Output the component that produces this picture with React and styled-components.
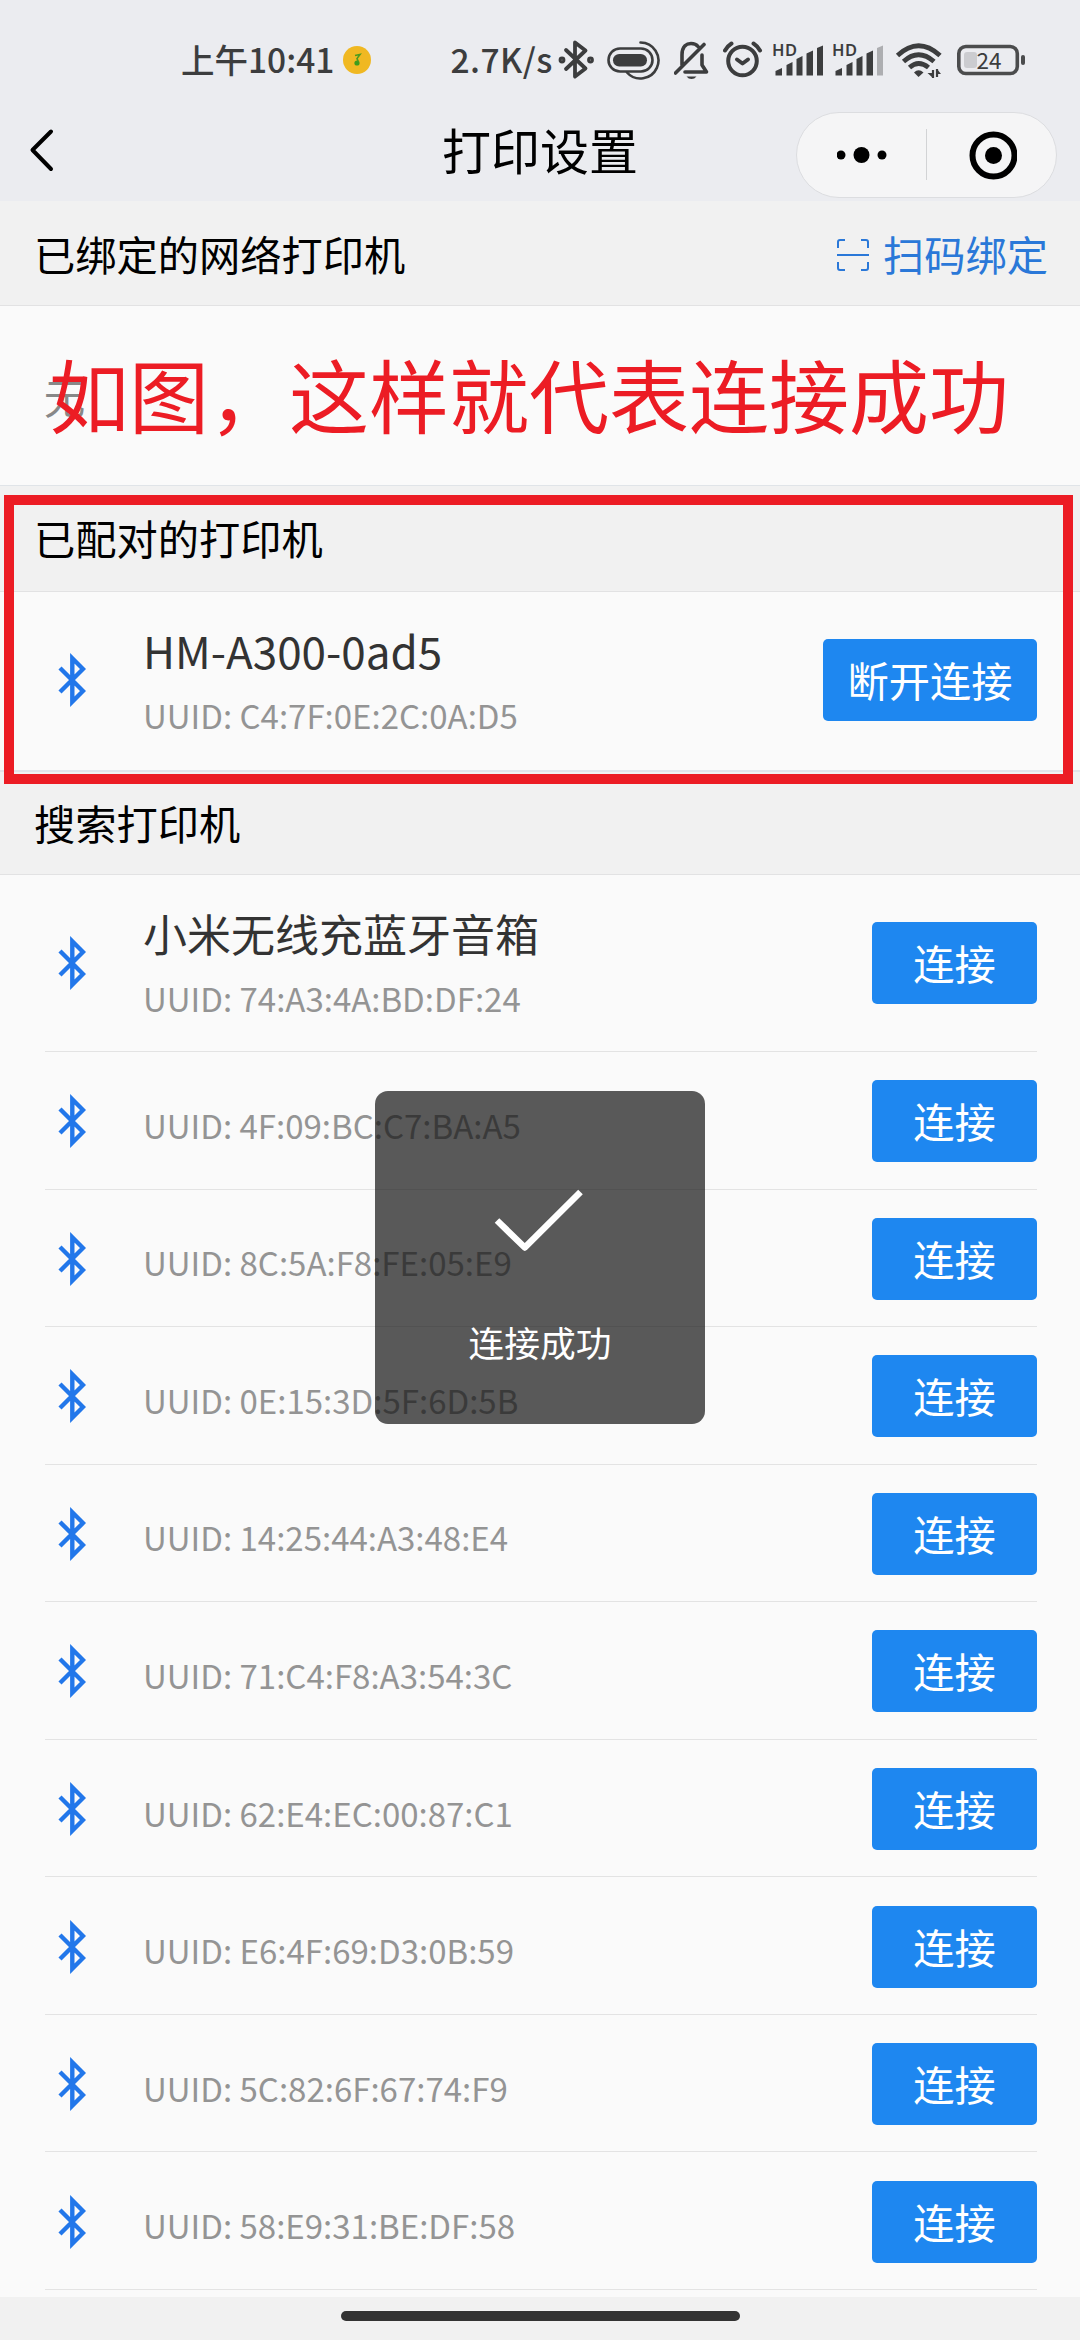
import React from 'react';
import styled, { createGlobalStyle } from 'styled-components';

const GlobalStyle = createGlobalStyle`
  * { box-sizing: border-box; }
  body { margin: 0; background: #f1f1f1; }
`;

const ink = '#3c3d3e';

const Screen = styled.main`
  position: relative;
  display: flex;
  flex-direction: column;
  width: 1080px;
  height: 2340px;
  overflow: hidden;
  background: #f1f1f1;
  color: #000;
  font-family: 'Noto Sans CJK SC', 'Noto Sans', sans-serif;
  white-space: nowrap;
`;

const StatusBar = styled.header`
  display: flex;
  align-items: center;
  height: 100px;
  padding: 18px 53px 0 181px;
  background: #ebecf0;
  color: ${ink};
`;

const StatusText = styled.span`
  font-size: 33.5px;
  font-weight: 500;
  line-height: 60px;
  letter-spacing: ${(p) => p.$spacing || 0}px;
  margin-left: ${(p) => p.$gap || 0}px;
`;

const Glyph = styled.svg`
  display: block;
  flex: none;
  margin-left: ${(p) => p.$gap || 0}px;
`;

const NavBar = styled.nav`
  display: grid;
  grid-template-columns: 284px 1fr 284px;
  align-items: center;
  height: 101px;
  padding-bottom: 1px;
  background: #ebecf0;
`;

const BackButton = styled.div`
  display: flex;
  padding-left: 28px;
`;

const Title = styled.h1`
  margin: 0;
  padding-bottom: 2px;
  font-size: 49px;
  font-weight: 400;
  line-height: 60px;
  text-align: center;
`;

const Capsule = styled.div`
  display: flex;
  align-items: center;
  width: 261px;
  height: 86px;
  margin: 9px 0 0 0;
  border: 1px solid #dcdde0;
  border-radius: 43px;
  background: #f5f5f6;
`;

const CapsuleHalf = styled.div`
  display: flex;
  flex: 1;
  justify-content: center;
`;

const CapsuleDivider = styled.div`
  width: 1px;
  height: 51px;
  background: #d2d3d5;
`;

const SectionHeader = styled.h2`
  display: flex;
  align-items: center;
  justify-content: space-between;
  flex: none;
  height: ${(p) => p.$height}px;
  margin: 0;
  padding: 0 32px ${(p) => p.$bottom}px 34px;
  border-bottom: 1px solid #e2e2e3;
  font-size: 41.25px;
  font-weight: 400;
  line-height: 60px;
`;

const ScanLink = styled.span`
  display: flex;
  align-items: center;
  gap: 14px;
  color: #2a78d8;
`;

const ScanIcon = styled.svg`
  margin-top: 5px;
`;

const Panel = styled.section`
  flex: none;
  background: #fafafa;
`;

const EmptyPanel = styled(Panel)`
  display: flex;
  align-items: center;
  height: 180px;
  padding: 0 45px 0 44px;
  border-bottom: 1px solid #e0e4e8;
  color: #888;
  font-size: 41.25px;
`;

const PairedPanel = styled(Panel)`
  border-bottom: 2px solid #e2e4e9;
`;

const Row = styled.div`
  display: grid;
  grid-template-columns: 98px 1fr auto;
  align-items: center;
  height: ${(p) => (p.$tall ? 177.5 : 137.56)}px;
  margin: 0 43px 0 45px;
  padding-top: ${(p) => (p.$tall ? 0 : 2)}px;
  padding-bottom: ${(p) => (p.$plain ? 2 : 0)}px;
  border-bottom: ${(p) => (p.$plain ? 'none' : '1px solid #e3e3e3')};
`;

const RowIcon = styled.span`
  display: flex;
  padding-left: 13px;
`;

const Info = styled.div`
  display: flex;
  flex-direction: column;
  padding-top: ${(p) => (p.$single ? 7 : 5)}px;
`;

const Name = styled.span`
  color: #333;
  font-size: 44px;
  line-height: 66px;
`;

const Uuid = styled.span`
  color: #949494;
  font-size: 33px;
  line-height: 64px;
`;

const ActionButton = styled.button`
  width: ${(p) => (p.$wide ? 214 : 165)}px;
  height: 82px;
  padding: 0 0 2px;
  border: 0;
  border-radius: 5px;
  background: #1e87f0;
  color: #fff;
  font: 400 41.25px/60px 'Noto Sans CJK SC', sans-serif;
`;

const SearchPanel = styled(Panel)`
  height: 1422px;
`;

const HomeArea = styled.footer`
  display: flex;
  justify-content: center;
  flex: 1;
  padding-top: 14px;
`;

const HomeBar = styled.div`
  width: 399px;
  height: 10px;
  border-radius: 5px;
  background: #333;
`;

const Note = styled.p`
  position: absolute;
  top: 336px;
  left: 49px;
  margin: 0;
  color: #ec1c24;
  font-size: 80px;
  line-height: 112px;
`;

const Highlight = styled.div`
  position: absolute;
  top: 495px;
  left: 4px;
  width: 1069px;
  height: 289px;
  border: 10px solid #ec1c24;
`;

const Toast = styled.div`
  position: absolute;
  top: 1091px;
  left: 375px;
  display: flex;
  flex-direction: column;
  align-items: center;
  width: 330px;
  height: 333px;
  padding-top: 88px;
  border-radius: 13px;
  background: rgba(20, 20, 20, 0.7);
  color: #fff;
  font-size: 35.75px;
  line-height: 50px;
`;

const ToastText = styled.span`
  margin-top: 58px;
`;

function Bluetooth() {
  return (
    <svg width="28" height="54" viewBox="0 0 28 54" fill="none" stroke="#2277ea" strokeWidth="4.4">
      <path d="M2 15L25 38L14.3 48.7V5.3L25 16L2 39" />
    </svg>
  );
}

function Signal({ x, weak }) {
  return (
    <Glyph $gap={x} width="51" height="60" viewBox="774 28 51 60" fill={ink}>
      <text x="773" y="55" fontFamily="'Noto Sans', sans-serif" fontSize="16.5" fontWeight="600" textLength="25">HD</text>
      <path d="M776.5 74.5V70L783 67V74.5Z" />
      <path d="M787.5 74.5V64L793.5 61V74.5Z" />
      <path d="M797.500 74.500V58L803.500 55V74.500Z" />
      <path d="M807.500 74.500V52.500L814 49.500V74.500Z" />
      <path d="M818 74.500V47L824 44.500V74.500Z" fill={weak ? '#adaeb1' : ink} />
    </Glyph>
  );
}

function StatusIcons() {
  return (
    <>
      <Glyph $gap={4} width="38" height="60" viewBox="558 28 38 60" fill="none" stroke={ink} strokeWidth="3.8" strokeLinejoin="round" strokeLinecap="round">
        <path d="M567 49L586.500 67.500L576 75.500V41.500L586.500 49.500L567 68" />
        <circle cx="563" cy="59" r="1.500" />
        <circle cx="591.500" cy="59" r="1.500" />
      </Glyph>
      <Glyph $gap={11} width="55" height="60" viewBox="607 28 55 60" fill="none" stroke={ink} strokeWidth="2.600">
        <rect x="609.500" y="47.500" width="44" height="23" rx="11.500" />
        <rect x="614" y="53" width="34" height="12.500" rx="6.200" fill={ink} stroke="none" />
        <path d="M641.500 41.500A18 18 0 1 1 628 71.500" strokeLinecap="round" />
      </Glyph>
      <Glyph $gap={13} width="36" height="60" viewBox="675 28 36 60" fill="none" stroke={ink} strokeWidth="3.600" strokeLinecap="round" strokeLinejoin="round">
        <path d="M676.500 72L705 43.500M683 64V54C683 45 688 42.500 692 42.500C695 42.500 697.500 43.500 699 45.500M686 71H707.500L703 64V54" />
        <path d="M687.500 75.500H697.500Q695.500 78 692.500 78T687.500 75.500Z" fill={ink} stroke="none" />
      </Glyph>
      <Glyph $gap={13} width="40" height="60" viewBox="724 28 40 60" fill="none" stroke={ink} strokeWidth="4" strokeLinecap="round" strokeLinejoin="round">
        <circle cx="743.500" cy="60" r="14.300" />
        <path d="M738 58.500L743.500 62.500L749 58.500" />
        <path d="M726 49.500Q728.500 45 732.500 42.500M761 49.500Q758.500 45 754.500 42.500" />
      </Glyph>
      <Signal x={10} />
      <Signal x={9} weak />
      <Glyph $gap={11} width="47" height="60" viewBox="896 28 47 60" fill="none" stroke={ink} strokeWidth="4.800">
        <path d="M898.500 54.500Q919.500 35 941 54.500M904.500 60.500Q919.500 47 935 60.500M910.500 66.500Q919.500 58.500 929.500 66.500" />
        <path d="M915 71.500Q919.500 67 924.500 71.500L919.500 76Z" fill={ink} stroke="none" />
        <path d="M934 69V77M938 68V76" strokeWidth="2.200" />
        <path d="M928.500 72L934 77V72ZM942 73L938 68V73Z" fill={ink} stroke="none" />
      </Glyph>
      <Glyph $gap={15} width="69" height="60" viewBox="958 28 69 60" fill="none">
        <rect x="959.800" y="45.500" width="58.500" height="27" rx="7" stroke="#4b4c4d" strokeWidth="3.600" />
        <rect x="965" y="51" width="13" height="16" rx="3" fill="#cbccd0" />
        <rect x="1022" y="54" width="4" height="10" rx="2" fill="#4b4c4d" />
        <text x="990" y="67.500" textAnchor="middle" fill={ink} fontFamily="'Noto Sans CJK SC', sans-serif" fontSize="22.500">24</text>
      </Glyph>
    </>
  );
}

function DeviceRow({ name, uuid, tall, plain, wide, action = '连接' }) {
  return (
    <Row $tall={tall} $plain={plain}>
      <RowIcon><Bluetooth /></RowIcon>
      <Info $single={!name}>
        {name && <Name>{name}</Name>}
        <Uuid>UUID: {uuid}</Uuid>
      </Info>
      <ActionButton $wide={wide}>{action}</ActionButton>
    </Row>
  );
}

const devices = [
  { name: '小米无线充蓝牙音箱', uuid: '74:A3:4A:BD:DF:24' },
  { uuid: '4F:09:BC:C7:BA:A5' },
  { uuid: '8C:5A:F8:FE:05:E9' },
  { uuid: '0E:15:3D:5F:6D:5B' },
  { uuid: '14:25:44:A3:48:E4' },
  { uuid: '71:C4:F8:A3:54:3C' },
  { uuid: '62:E4:EC:00:87:C1' },
  { uuid: 'E6:4F:69:D3:0B:59' },
  { uuid: '5C:82:6F:67:74:F9' },
  { uuid: '58:E9:31:BE:DF:58' },
];

export default function App() {
  return (
    <Screen>
      <GlobalStyle />
      <StatusBar>
        <StatusText>上午10:41</StatusText>
        <Glyph $gap={9} width="28" height="60" viewBox="343 28 28 60">
          <circle cx="357" cy="59" r="14" fill="#f0b822" />
          <circle cx="357" cy="62" r="2.600" fill="#3f9c1c" />
          <path d="M355 54.500L360 53.500L357 57.500L358.500 61" fill="none" stroke="#4b9c20" strokeWidth="1.600" />
        </Glyph>
        <StatusText $gap={79} $spacing={0.5}>2.7K/s</StatusText>
        <StatusIcons />
      </StatusBar>
      <NavBar>
        <BackButton>
          <svg width="26" height="44" viewBox="28 129 26 44" fill="none" stroke="#000" strokeWidth="4" strokeLinecap="round" strokeLinejoin="round">
            <path d="M51 132.500L32.500 151L51 170" />
          </svg>
        </BackButton>
        <Title>打印设置</Title>
        <Capsule>
          <CapsuleHalf>
            <svg width="50" height="50" viewBox="835.500 130 50 50">
              <circle cx="839.500" cy="155" r="4.500" />
              <circle cx="860" cy="155" r="8" />
              <circle cx="880.500" cy="155" r="4.500" />
            </svg>
          </CapsuleHalf>
          <CapsuleDivider />
          <CapsuleHalf>
            <svg width="50" height="50" viewBox="0 0 50 50">
              <circle cx="26.500" cy="25.500" r="21" fill="none" stroke="#000" strokeWidth="6" />
              <circle cx="26.500" cy="25.500" r="8.500" />
            </svg>
          </CapsuleHalf>
        </Capsule>
      </NavBar>
      <SectionHeader $height={105} $bottom={1}>
        已绑定的网络打印机
        <ScanLink>
          <ScanIcon width="32" height="34" viewBox="0 0 32 34" fill="none" stroke="#2a78d8" strokeWidth="2">
            <path d="M1 10V4Q1 2 3 2H8M24 2H29Q31 2 31 4V10M31 24V30Q31 32 29 32H24M8 32H3Q1 32 1 30V24M0 17H32" />
          </ScanIcon>
          扫码绑定
        </ScanLink>
      </SectionHeader>
      <EmptyPanel>无</EmptyPanel>
      <SectionHeader $height={106} $bottom={3}>已配对的打印机</SectionHeader>
      <PairedPanel>
        <DeviceRow tall plain wide name="HM-A300-0ad5" uuid="C4:7F:0E:2C:0A:D5" action="断开连接" />
      </PairedPanel>
      <SectionHeader $height={103} $bottom={2}>搜索打印机</SectionHeader>
      <SearchPanel>
        {devices.map((d) => (
          <DeviceRow key={d.uuid} tall={!!d.name} {...d} />
        ))}
      </SearchPanel>
      <HomeArea>
        <HomeBar />
      </HomeArea>
      <Note>如图，这样就代表连接成功</Note>
      <Highlight />
      <Toast>
        <svg width="94" height="80" viewBox="493 1180 94 80" fill="none" stroke="#fff" strokeWidth="6.500" strokeLinejoin="round">
          <path d="M497 1221.500L524.800 1248.500L580.500 1193" />
        </svg>
        <ToastText>连接成功</ToastText>
      </Toast>
    </Screen>
  );
}
